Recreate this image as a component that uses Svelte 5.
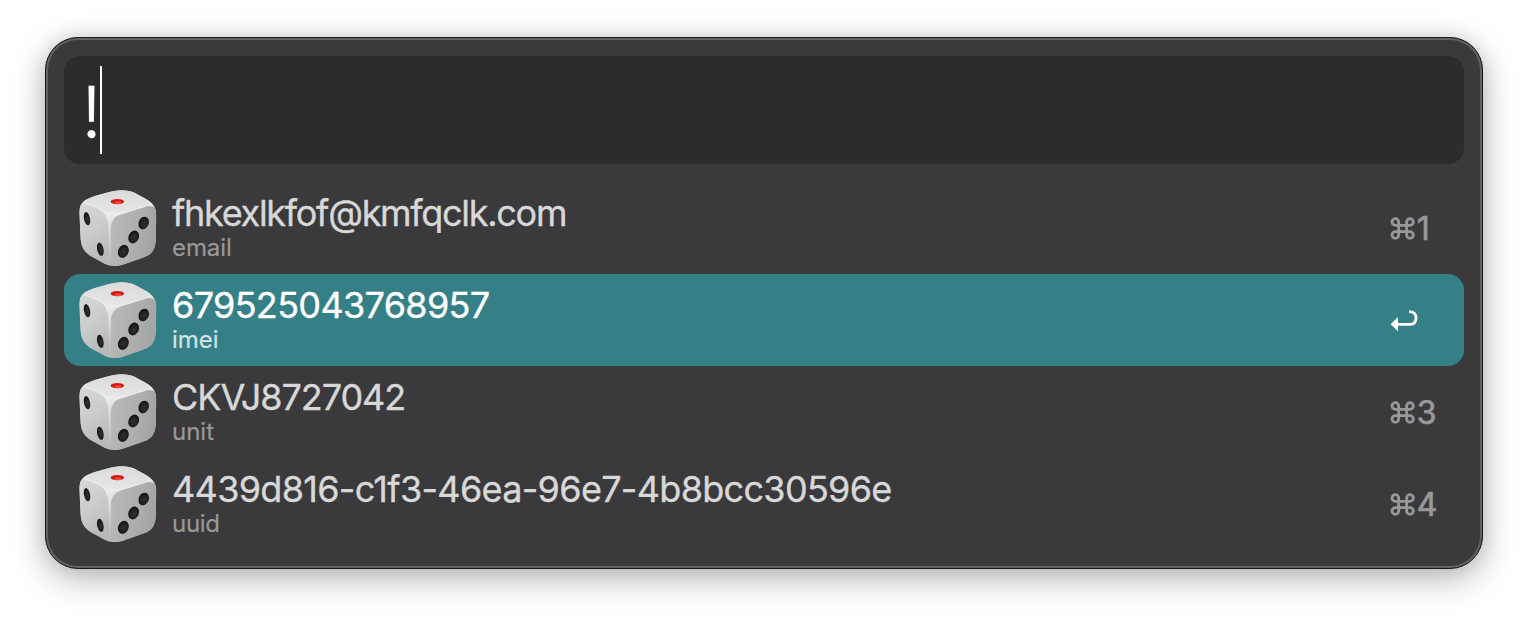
<script>
  const rows = [
    { title: 'fhkexlkfof@kmfqclk.com', kind: 'email', key: '1', spacing: -1.29, sub: -0.1 },
    { title: '679525043768957', kind: 'imei', key: '2', spacing: -0.67, sub: -0.05, selected: true },
    { title: 'CKVJ8727042', kind: 'unit', key: '3', spacing: -1.05, sub: 0 },
    { title: '4439d816-c1f3-46ea-96e7-4b8bcc30596e', kind: 'uuid', key: '4', spacing: -0.69, sub: -0.3 }
  ];
</script>

<main>
  <section class="panel">
    <div class="search"><span class="query">!</span><span class="caret"></span></div>
    <div class="results">
      {#each rows as row}
        <div class="row" class:selected={row.selected}>
          <svg class="dice" viewBox="24 24 240 240" aria-hidden="true">
            <defs>
              <linearGradient id="top" x1="0" y1="0" x2="0" y2="1">
                <stop offset="0" stop-color="#d9dad9" /><stop offset="1" stop-color="#e4e5e4" />
              </linearGradient>
              <linearGradient id="left" x1="0" y1="0" x2=".4" y2="1">
                <stop offset="0" stop-color="#d8d9d8" /><stop offset=".5" stop-color="#cbcdcc" /><stop offset="1" stop-color="#b8bab9" />
              </linearGradient>
              <linearGradient id="right" x1="0" y1="0" x2="1" y2=".25">
                <stop offset="0" stop-color="#b9bbba" /><stop offset=".6" stop-color="#adafae" /><stop offset="1" stop-color="#a2a4a3" />
              </linearGradient>
              <linearGradient id="body" x1="0" y1="0" x2="0" y2="1">
                <stop offset="0" stop-color="#dedfde" /><stop offset=".3" stop-color="#ebeceb" /><stop offset=".6" stop-color="#d4d6d5" /><stop offset="1" stop-color="#b4b6b5" />
              </linearGradient>
              <radialGradient id="pip" cx=".55" cy=".55" r=".6">
                <stop offset="0" stop-color="#303030" /><stop offset=".6" stop-color="#202020" /><stop offset="1" stop-color="#080808" />
              </radialGradient>
              <filter id="soft"><feGaussianBlur stdDeviation="2.2" /></filter>
              <clipPath id="shape"><path d="M28 98C28 68 44 58 72 49L118 36Q156 25 189 36L222 53C248 67 259 80 259 108L257 182C255 210 245 223 222 232L156 255Q126 263 106 252L62 228C42 214 34 200 32 176Z" /></clipPath>
            </defs>
            <g clip-path="url(#shape)">
              <rect x="24" y="24" width="240" height="240" fill="url(#body)" />
              <path d="M46 66Q70 44 118 34Q156 25 189 34L240 68Q226 80 156 95Q126 102 105 93Q77 76 46 66Z" fill="url(#top)" filter="url(#soft)" />
              <path d="M18 84Q30 66 54 75Q92 84 105 104Q115 118 115 150L120 262Q70 260 40 238L18 205Z" fill="url(#left)" filter="url(#soft)" />
              <path d="M123 142Q124 112 150 104L222 82Q256 68 268 104L264 205Q252 240 225 246L122 270Z" fill="url(#right)" filter="url(#soft)" />
            </g>
            <ellipse cx="142" cy="65" rx="20" ry="8" fill="#d31a14" />
            <ellipse cx="144" cy="68" rx="10" ry="4" fill="#f8463a" />
            <g fill="url(#pip)">
              <ellipse cx="51" cy="116" rx="9" ry="20" transform="rotate(-12 51 116)" />
              <ellipse cx="91" cy="208" rx="9.5" ry="20" transform="rotate(-12 91 208)" />
              <ellipse cx="221" cy="129" rx="15" ry="19.5" transform="rotate(24 221 129)" />
              <ellipse cx="191" cy="171" rx="15.5" ry="20" transform="rotate(24 191 171)" />
              <ellipse cx="160" cy="214" rx="15.5" ry="20" transform="rotate(24 160 214)" />
            </g>
          </svg>
          <div class="labels">
            <div class="title" style:letter-spacing="{row.spacing}px">{row.title}</div>
            <div class="kind" style:letter-spacing="{row.sub}px">{row.kind}</div>
          </div>
          <div class="shortcut">
            {#if row.selected}
              <svg class="return" viewBox="60 326 84 70" aria-hidden="true">
                <path d="M62 372L84 350V393Z" fill="#fff" />
                <path d="M82 372H120Q138 372 138 353Q138 334 117 334" fill="none" stroke="#fff" stroke-width="8.4" />
              </svg>
            {:else}
              <svg class="command" viewBox="60 48 76 76" aria-hidden="true">
                <path d="M86 76H76a10 10 0 1 1 10-10V105a10 10 0 1 1-10-10H120a10 10 0 1 1-10 10V66a10 10 0 1 1 10 10Z" fill="none" stroke="#98989a" stroke-width="8.6" />
              </svg><span>{row.key}</span>
            {/if}
          </div>
        </div>
      {/each}
    </div>
  </section>
</main>

<style>
  :global(body) { background: #fff; overflow: hidden; }
  main {
    box-sizing: border-box;
    height: 622px;
    padding: 37px 45px 53px;
    font-family: Inter, "Liberation Sans", sans-serif;
  }
  .panel {
    box-sizing: border-box;
    height: 532px;
    padding: 18px;
    border: 1px solid #171718;
    border-radius: 33px;
    background: #3a3a3c;
    box-shadow: inset 0 0 0 2px #626365, 0 10px 34px rgba(0, 0, 0, .28), 0 0 20px rgba(0, 0, 0, .1);
  }
  .search {
    display: flex;
    box-sizing: border-box;
    height: 108px;
    padding: 10px 20px;
    border-radius: 16px;
    background: #2c2c2e;
    color: #fff;
  }
  .query {
    width: 16px;
    font-size: 71px;
    font-weight: 300;
    line-height: 93px;
    text-indent: -2.6px;
    -webkit-text-stroke: .4px currentColor;
  }
  .caret { width: 2px; height: 88px; background: #fff; }
  .results { margin-top: 18px; }
  .row {
    display: flex;
    align-items: center;
    box-sizing: border-box;
    height: 92px;
    padding: 0 14px;
    border-radius: 16px;
    color: #d8d8d9;
  }
  .selected { background: #358087; color: #fff; }
  .dice { width: 80px; height: 80px; flex: none; }
  .labels { flex: 1; padding-left: 14px; white-space: nowrap; }
  .title { font-size: 36px; line-height: 38px; padding-bottom: 2px; -webkit-text-stroke: .35px currentColor; }
  .kind { font-size: 24px; line-height: 28px; color: #98989a; -webkit-text-stroke: .2px currentColor; }
  .selected .kind { color: #d1e3e5; }
  .shortcut {
    display: flex;
    align-items: center;
    width: 60px;
    padding-top: 2px;
    color: #98989a;
    font-size: 32px;
    line-height: 40px;
    -webkit-text-stroke: .7px currentColor;
  }
  .shortcut span { padding-left: 1.5px; }
  .command { width: 25.33px; height: 25.33px; flex: none; }
  .return { width: 28px; height: 23.33px; }
</style>
